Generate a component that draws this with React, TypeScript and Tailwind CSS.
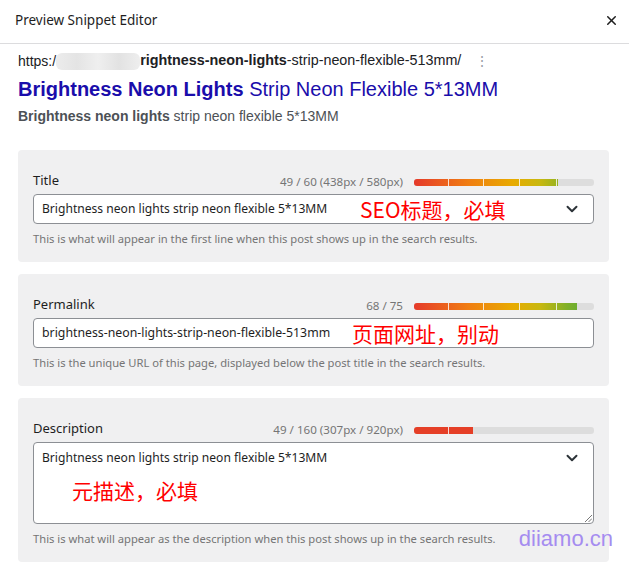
import React from "react";
import { X, ChevronDown } from "lucide-react";

const ui = { fontFamily: '"Noto Sans", "Open Sans", sans-serif' };
const arial = { fontFamily: '"Liberation Sans", Arial, sans-serif' };
const cjk = { fontFamily: '"Noto Sans CJK SC", sans-serif' };

function Bar({ pct, solid }: { pct: number; solid?: boolean }) {
  return (
    <div className="relative w-[180px] h-[7px] rounded-[3px] bg-[#dddddd] overflow-hidden">
      <div className="absolute left-0 top-0 h-full overflow-hidden" style={{ width: `${pct}%` }}>
        <div
          className={
            solid
              ? "w-[180px] h-full bg-[#e53f27]"
              : "w-[180px] h-full bg-[linear-gradient(90deg,#e53a2b_0%,#f07d12_30%,#e8ab00_55%,#c8b810_70%,#80b028_85%,#4ea93c_100%)]"
          }
        />
        <div className="absolute top-0 left-[34px] w-px h-full bg-white/80" />
        <div className="absolute top-0 left-[69px] w-px h-full bg-white/80" />
        <div className="absolute top-0 left-[105px] w-px h-full bg-white/80" />
        <div className="absolute top-0 left-[142px] w-px h-full bg-white/80" />
      </div>
    </div>
  );
}

function Card({
  label,
  count,
  pct,
  solid,
  children,
  help,
  extra,
}: {
  label: string;
  count: string;
  pct: number;
  solid?: boolean;
  children: React.ReactNode;
  help: string;
  extra?: React.ReactNode;
}) {
  return (
    <div className="relative rounded-[4px] bg-[#f0f0f1] px-[15px] pt-[21px] pb-[15px]">
      <div className="flex items-center justify-between h-[18px] mb-[5px]">
        <span className="text-[13px] leading-[18px] text-[#1e1e1e]">{label}</span>
        <div className="flex items-center gap-[11px] translate-y-[2px]">
          <span className="text-[11.6px] leading-[16px] text-[#757575]">{count}</span>
          <Bar pct={pct} solid={solid} />
        </div>
      </div>
      {children}
      <div className="mt-[7px] text-[11.2px] leading-[16px] text-[#757575]">{help}</div>
      {extra}
    </div>
  );
}

export default function App() {
  return (
    <div className="w-[629px] h-[563px] bg-white overflow-hidden" style={ui}>
      <div className="h-[44px] flex items-center justify-between pl-[15px] pr-[10px] border-b border-[#dcdcde]">
        <span className="text-[13.5px] text-[#1e1e1e] -mt-[3px]">Preview Snippet Editor</span>
        <X size={15} strokeWidth={2.4} className="text-[#1e1e1e] -mt-[3px]" />
      </div>

      <div className="px-[18px] pt-[8px]" style={arial}>
        <div className="flex items-center h-[18px] text-[14px] text-[#202124]">
          <span>https:/</span>
          <span className="inline-block w-[84px] h-[17px] rounded-[6px] bg-[linear-gradient(90deg,#ececec,#e4e4e4,#efefef,#e2e2e2,#eeeeee)]" />
          <span className="text-[14.35px]">
            <b className="font-bold">rightness-neon-lights</b>-strip-neon-flexible-513mm/
          </span>
          <span className="ml-[14px] text-[#9aa0a6] text-[14px] leading-none">⋮</span>
        </div>
        <div className="mt-[6px] h-[26px] leading-[26px] text-[20px] text-[#1a0dab]">
          <b className="font-bold">Brightness Neon Lights</b> Strip Neon Flexible 5*13MM
        </div>
        <div className="mt-[5px] h-[18px] leading-[18px] text-[14px] text-[#4d5156]">
          <b className="font-bold">Brightness neon lights</b> strip neon flexible 5*13MM
        </div>
      </div>

      <div className="mt-[25px] mx-[18px] w-[591px] flex flex-col gap-[12px]">
        <Card
          label="Title"
          count="49 / 60 (438px / 580px)"
          pct={80}
          help="This is what will appear in the first line when this post shows up in the search results."
        >
          <div className="relative h-[30px] rounded-[4px] border border-[#8c8f94] bg-white flex items-center pl-[8px] pr-[12px]">
            <span className="text-[12.1px] text-[#1e1e1e]">Brightness neon lights strip neon flexible 5*13MM</span>
            <span className="absolute left-[326px] top-[0px] text-[21px] leading-[28px] text-[#ff0000]" style={cjk}>
              SEO标题，必填
            </span>
            <ChevronDown size={18} strokeWidth={2.6} className="ml-auto text-[#2c3338]" />
          </div>
        </Card>

        <Card
          label="Permalink"
          count="68 / 75"
          pct={90.7}
          help="This is the unique URL of this page, displayed below the post title in the search results."
        >
          <div className="relative h-[30px] rounded-[4px] border border-[#8c8f94] bg-white flex items-center pl-[8px] pr-[12px]">
            <span className="text-[12.3px] text-[#1e1e1e]">brightness-neon-lights-strip-neon-flexible-513mm</span>
            <span className="absolute left-[318px] top-[0px] text-[21px] leading-[28px] text-[#ff0000]" style={cjk}>
              页面网址，别动
            </span>
          </div>
        </Card>

        <Card
          label="Description"
          count="49 / 160 (307px / 920px)"
          pct={33}
          solid
          help="This is what will appear as the description when this post shows up in the search results."
          extra={
            <span className="absolute right-[-4px] bottom-[10px] text-[22px] leading-[26px] text-[#a58cf0]" style={arial}>
              diiamo.cn
            </span>
          }
        >
          <div className="relative h-[82px] rounded-[4px] border border-[#8c8f94] bg-white pl-[8px] pr-[12px] pt-[6px]">
            <div className="flex items-start">
              <span className="text-[12.1px] leading-[18px] text-[#1e1e1e]">
                Brightness neon lights strip neon flexible 5*13MM
              </span>
              <ChevronDown size={18} strokeWidth={2.6} className="ml-auto text-[#2c3338]" />
            </div>
            <span className="absolute left-[38px] top-[33px] text-[21px] leading-[28px] text-[#ff0000]" style={cjk}>
              元描述，必填
            </span>
            <svg className="absolute right-[1px] bottom-[1px]" width="8" height="8" viewBox="0 0 8 8">
              <line x1="1" y1="8" x2="8" y2="1" stroke="#555" strokeWidth="0.8" />
              <line x1="4.5" y1="8" x2="8" y2="4.5" stroke="#555" strokeWidth="0.8" />
            </svg>
          </div>
        </Card>
      </div>
    </div>
  );
}
